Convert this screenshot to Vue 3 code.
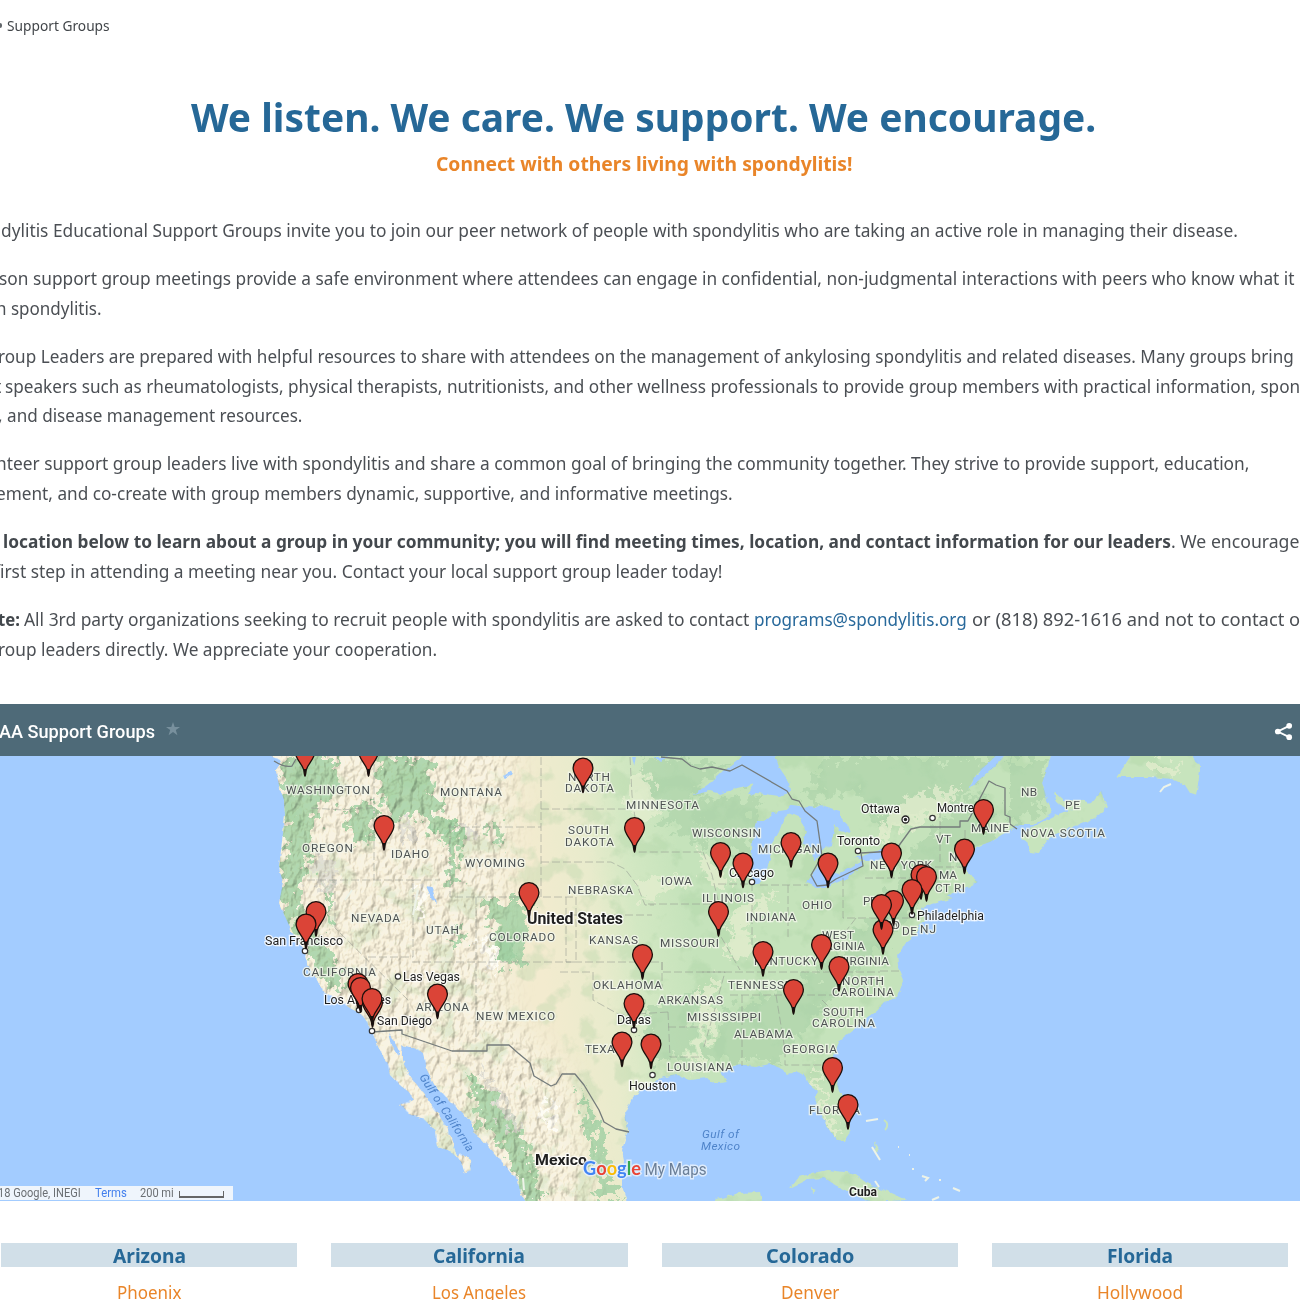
<script setup>
// Stretches or condenses a run of text to a given width.
const fit = (el, width) => {
  el.style.transform = 'none'
  const natural = el.offsetWidth
  el.style.transform = `scaleX(${width / natural})`
  el.style.marginRight = `${width - natural}px`
}
const vFit = {
  mounted(el, { value }) {
    fit(el, value)
    document.fonts.ready.then(() => fit(el, value))
  },
}

// Each line is a start offset and its runs: { t: text, w: width, b: bold, a: link, g: gap before }
const paragraphs = [
  [{ x: 1, runs: [{ t: 'dylitis Educational Support Groups invite you to join our peer network of people with spondylitis who are taking an active role in managing their disease.', w: 1237 }] }],
  [
    { x: -1, runs: [{ t: 'son support group meetings provide a safe environment where attendees can engage in confidential, non-judgmental interactions with peers who know what it', w: 1296 }] },
    { x: -4, runs: [{ t: 'n spondylitis.', w: 106 }] },
  ],
  [
    { x: -2, runs: [{ t: 'roup Leaders are prepared with helpful resources to share with attendees on the management of ankylosing spondylitis and related diseases. Many groups bring', w: 1296 }] },
    { x: -6, runs: [{ t: 't', w: 7 }, { t: 'speakers such as rheumatologists, physical therapists, nutritionists, and other wellness professionals to provide group members with practical information, spon', w: 1295, g: 4 }] },
    { x: -2, runs: [{ t: ', and disease management resources.', w: 304 }] },
  ],
  [
    { x: -4, runs: [{ t: 'nteer support group leaders live with spondylitis and share a common goal of bringing the community together. They strive to provide support, education,', w: 1253 }] },
    { x: -4, runs: [{ t: 'ement, and co-create with group members dynamic, supportive, and informative meetings.', w: 737 }] },
  ],
  [
    { x: 3, runs: [{ t: 'location below to learn about a group in your community; you will find meeting times, location, and contact information for our leaders', w: 1168, b: true }, { t: '. We encourage', w: 128 }] },
    { x: -6, runs: [{ t: 'first step in attending a meeting near you. Contact your local support group leader today!', w: 728 }] },
  ],
  [
    { x: -2, runs: [{ t: 'te:', w: 22, b: true }, { t: 'All 3rd party organizations seeking to recruit people with spondylitis are asked to contact', w: 725, g: 4 }, { t: 'programs@spondylitis.org', w: 213, g: 5, a: true }, { t: 'or (818) 892-1616 and not to contact o', w: 328, g: 5 }] },
    { x: -2, runs: [{ t: 'roup leaders directly. We appreciate your cooperation.', w: 439 }] },
  ],
]

const columns = [
  { state: 'Arizona', city: 'Phoenix', sw: 73, cw: 64 },
  { state: 'California', city: 'Los Angeles', sw: 92, cw: 94 },
  { state: 'Colorado', city: 'Denver', sw: 88, cw: 58 },
  { state: 'Florida', city: 'Hollywood', sw: 66, cw: 86 },
]

// [text, left, right, baseline]
const regions = [
  ['WASHINGTON', 286, 370, 794], ['MONTANA', 440, 502, 796], ['OREGON', 302, 353, 852],
  ['IDAHO', 391, 429, 858], ['WYOMING', 465, 525, 867], ['NEVADA', 351, 400, 922],
  ['UTAH', 426, 459, 933.5], ['COLORADO', 489, 555, 940.5], ['CALIFORNIA', 303, 376, 975.5],
  ['ARIZONA', 416, 469, 1010.5], ['NEW MEXICO', 476, 555, 1020], ['NORTH', 568, 610, 781],
  ['DAKOTA', 565, 614, 792], ['SOUTH', 568, 609, 834], ['DAKOTA', 565, 614, 846],
  ['MINNESOTA', 626, 699, 809], ['WISCONSIN', 692, 761, 837], ['MICHIGAN', 758, 820, 852.5],
  ['NEBRASKA', 568, 633, 893.5], ['IOWA', 661, 692, 884.5], ['ILLINOIS', 702, 754, 902],
  ['INDIANA', 746, 796, 921], ['OHIO', 802, 832, 908.5], ['KANSAS', 589, 638, 944],
  ['MISSOURI', 660, 719, 946.5], ['KENTUCKY', 754, 818, 965], ['WEST', 822, 854, 938.5],
  ['VIRGINIA', 814, 865, 949.5], ['VIRGINIA', 838, 889, 965], ['OKLAHOMA', 593, 662, 989],
  ['ARKANSAS', 658, 723, 1004], ['TENNESSEE', 728, 799, 989], ['NORTH', 842, 884, 984.5],
  ['CAROLINA', 832, 894, 995.5], ['SOUTH', 823, 864, 1015.5], ['CAROLINA', 812, 875, 1027],
  ['MISSISSIPPI', 687, 761, 1020.5], ['ALABAMA', 734, 793, 1037.5], ['GEORGIA', 783, 837, 1052.5],
  ['LOUISIANA', 667, 733, 1070.5], ['TEXAS', 585, 622, 1053], ['FLORIDA', 809, 860, 1114],
  ['NB', 1021, 1037, 796], ['PE', 1065, 1080, 808.5], ['NOVA SCOTIA', 1021, 1105, 837],
  ['MAINE', 971, 1009, 831.5], ['VT', 936, 951, 843], ['NH', 949, 967, 860.5],
  ['NEW YORK', 870, 932, 869], ['MA', 939, 957, 878.5], ['CT', 935, 950, 891.5],
  ['RI', 954, 965, 891.5], ['PENN', 863, 893, 904.5], ['MD', 888, 900, 928.5],
  ['DE', 902, 917, 934.5], ['NJ', 920, 936, 933],
]
const cities = [
  ['San Francisco', 265, 343, 945], ['Los Angeles', 324, 391, 1004], ['San Diego', 377, 432, 1025],
  ['Las Vegas', 403, 460, 981], ['Chicago', 729, 774, 876.5], ['Toronto', 837, 880, 845],
  ['Ottawa', 861, 900, 813], ['Montreal', 937, 983, 812], ['Philadelphia', 917, 984, 920],
  ['Dallas', 617, 651, 1024], ['Houston', 629, 676, 1090],
]
const countries = [
  ['United States', 527, 623, 924, 16], ['Mexico', 535, 587, 1165, 15.5], ['Cuba', 849, 877, 1196, 12.5],
]
const dots = [[305, 951], [359, 1010], [372, 1031], [398, 976.5], [752, 882], [858, 851], [932.5, 818], [912, 915], [634, 1030], [652.5, 1075]]

// Pin tips, drawn in order
const pins = [
  [305, 776], [368.5, 776], [384, 850], [316, 936], [306, 948.5], [529, 917], [583, 792.5],
  [634.5, 852], [720.5, 877], [743, 887.5], [791, 867], [828, 887.5], [718.5, 936], [642.5, 979],
  [763, 976], [821.5, 969], [839, 991], [793.5, 1014], [983.5, 834], [964.5, 873.5], [891.5, 877.5],
  [921, 899], [926.5, 901], [912, 914], [893.5, 925], [883, 954], [881.5, 929], [437.5, 1018.5],
  [358, 1008], [360.5, 1012], [372.5, 1027], [372, 1023], [634, 1028], [622, 1066.5], [651, 1068.5],
  [832.5, 1092], [848, 1129],
]

const land =
  'M270 750L272 757L282 761L276 770L279 785L284 800L285 815L283 833L281 850L279 867L283 883L279 903L288 923L295 937L303 948L307 963L317 980L324 993L338 1000L350 1008L363 1015L372 1032L380 1050L387 1062L390 1075L400 1085L410 1093L414 1100L400 1104L410 1115L422 1118L435 1130L437 1147L448 1150L460 1160L465 1173L471 1170L470 1160L460 1153L457 1156L448 1130L437 1112L423 1093L408 1073L402 1060L402 1045L414 1048L423 1053L427 1070L435 1085L450 1102L463 1113L473 1123L473 1132L482 1139L490 1148L503 1163L510 1172L518 1180L520 1192L526 1202L627 1202L622 1186L622 1173L624 1160L622 1150L628 1130L626 1120L625 1113L632 1098L640 1092L650 1087L660 1078L677 1075L690 1080L707 1078L715 1083L727 1081L720 1073L728 1067L740 1065L755 1067L770 1064L780 1068L787 1075L795 1071L803 1074L810 1085L817 1090L815 1103L821 1113L827 1127L837 1140L845 1141L850 1130L850 1119L846 1105L840 1090L834 1070L833 1056L840 1040L853 1030L865 1020L877 1011L885 1002L897 997L904 980L898 965L897 953L888 940L898 955L903 950L906 942L913 937L918 928L925 920L922 907L934 902L950 895L957 889L972 886L978 882L972 877L965 868L966 856L975 847L990 842L1003 834L1013 828L1020 825L1033 825L1045 818L1053 811L1047 800L1045 792L1042 783L1047 770L1052 750L1010 750L990 770L968 790L975 776L1002 750Z'
const islands = [
  'M1021 838L1032 827L1060 813L1090 804L1102 790L1103 800L1108 807L1095 818L1073 827L1050 837L1038 853L1030 852L1027 841Z',
  'M1053 791L1063 800L1086 801L1088 806L1070 810L1056 803Z',
  'M1117 777L1130 757L1131 750H1190L1200 765L1200 772L1196 795L1190 793L1185 785L1172 779L1150 777Z',
  'M790 1188L797 1178L812 1173L828 1170L853 1173L868 1184L885 1190L907 1200L870 1202L848 1192L838 1187L825 1178L808 1179Z',
  'M717 1199L740 1193L760 1192L762 1202L715 1202Z',
  'M927 903L943 896L953 898L929 905Z', 'M812 1188L817 1190L813 1193Z', 'M874 1142L879 1150L876 1154Z',
]
const lakes = [
  'M693 795L710 783L724 770L737 761L742 755L775 755L779 767L789 782L790 793L778 796L757 793L748 794L755 784L737 788L720 794L710 791Z',
  'M752 850L753 835L757 821L764 821L772 813L793 810L784 818L779 832L771 845L770 860L764 877L758 884L752 883L750 866Z',
  'M786 812L792 805L815 808L821 805L841 811L841 819L848 825L851 833L840 831L835 825L831 845L824 848L817 860L813 861L812 848L803 843L806 832L800 818Z',
  'M807 883L811 876L818 866L823 870L839 874L856 864L863 861L862 866L847 878L827 887L815 887Z',
  'M853 856L861 857L880 850L895 848L894 857L878 860L862 860Z',
  'M426 886L431 887L435 896L437 903L432 899Z', 'M388 1033L394 1040L400 1052L398 1056L391 1045Z',
  'M654 757L668 757L660 762ZM632 757L636 757L634 766Z', 'M503 777L512 771L511 775L505 779Z',
]
const greens = [
  'M282 757H340L332 800L318 805L312 850L300 890L305 920L330 950L345 985L330 990L305 950L288 920L281 900L286 870L284 820Z',
  'M375 757H425L440 810L460 830L440 840L420 815L400 820L380 800Z',
  'M350 810L375 800L375 840L355 845Z', 'M445 820L462 830L458 890L450 880Z', 'M325 870L332 900L330 930L325 920Z',
  'M488 900L530 900L522 965L495 960Z', 'M488 825L500 828L505 845L490 836Z', 'M500 930L518 940L510 970L498 968Z',
  'M465 1070L480 1085L510 1110L530 1150L540 1201H525L505 1150L480 1120Z', 'M436 820L440 835L434 838Z',
  'M580 1090L598 1120L604 1150L620 1200L600 1200L590 1150Z', 'M455 925L465 940L450 945Z',
]
const forests = [
  'M640 757L730 765L690 800L705 850L680 830L650 810Z', 'M690 800L760 794L750 830L752 860L725 845L700 830Z',
  'M800 985L850 940L900 880L900 860L980 790L1000 840L960 865L930 890L900 920L880 950L820 1010L780 1060L700 1060L730 1010Z',
  'M640 1010L700 990L690 1060L655 1060Z', 'M830 757H1000L960 800L880 830L860 790L800 800Z',
  'M1010 760H1050L1040 810L1010 825Z',
]
const pales = [
  'M700 990L716 975L712 1020L703 1060L690 1074L700 1030Z', 'M812 1065L822 1080L828 1112L840 1130L830 1135L820 1100Z',
  'M880 825L910 795L960 788L940 815L900 830L875 848Z', 'M730 910L780 890L740 930L765 950L730 960Z', 'M640 880L690 880L640 905Z',
  'M645 770L660 800L640 830L625 790Z', 'M700 850L730 870L725 890L705 880Z', 'M1150 760L1180 765L1175 778L1150 776Z',
]
const stateLines = [
  'M311 808L343 810L360 808L374 808V757', 'M374 808V880', 'M307 880H413V957H366V1000', 'M335 880V928L408 1000V1032',
  'M413 880H440M412 962H575M450 825V897H576V962M450 827H541M541 757V897M541 809H627M541 862H611L625 869L637 885L645 905H654',
  'M476 897V962V1040M566 897V915H652M566 915V962H662V990M560 972H593V1000L620 1015L668 1012',
  'M630 757L632 795L635 818V852H703M703 852L712 875L718 900L720 935L740 970M648 904H710M662 962V972H725L716 1005L703 1050',
  'M668 1012L670 1057H702M668 1027H705M702 972H880M730 995H840M742 995V1066M776 995L785 1050V1065H830M822 1000L850 1028',
  'M718 884H752V945M788 885V938M760 885H808M843 878V918H935M856 918L820 965M865 878H940M940 810V862M965 830V855M935 867H962M880 971H902',
]
const borders = [
  'M274 761Q285 768 292 766L296 759', 'M372 1032L402 1030V1034L452 1051H487V1045H509L518 1053L530 1063L534 1076L551 1086L556 1084L562 1074L575 1074L584 1085L593 1100L599 1110L604 1122L616 1129L629 1132',
  'M661 757L682 759L691 766L700 769L712 767L730 771L742 765L787 791L792 799L799 801L805 811L817 821L822 856L811 875L817 886L827 885L836 879L863 866L861 853L895 851L911 829L920 827H960L960 821L968 821L977 804L989 781L996 785L1005 788V815L1010 817V824L1017 829',
]
const islets = ['M866 1121L878 1119', 'M872 1147L880 1160', 'M922 1176L928 1178L925 1181', 'M953 1188L960 1191', 'M932 1200L939 1197', 'M1160 792L1164 787L1171 784', 'M898 1147h1M909 1155h1M912 1169h2M939 1180h2', 'M875 1181L879 1187', 'M418 890L413 915', 'M345 900L352 890', 'M523 1178L524 1190']
</script>

<template>
  <div class="page">
    <nav class="crumbs"><span class="dot"></span><span v-fit="103" class="run">Support Groups</span></nav>

    <header class="hero">
      <h1><span v-fit="905" class="run">We listen. We care. We support. We encourage.</span></h1>
      <h2><span v-fit="416" class="run">Connect with others living with spondylitis!</span></h2>
    </header>

    <main class="copy">
      <p v-for="(p, i) in paragraphs" :key="i">
        <span v-for="(line, j) in p" :key="j" class="line" :style="{ marginLeft: line.x + 'px' }">
          <span
            v-for="(r, k) in line.runs"
            :key="k"
            v-fit="r.w"
            class="run"
            :class="{ bold: r.b, link: r.a }"
            :style="{ marginLeft: (r.g || 0) + 'px' }"
          >{{ r.t }}</span>
        </span>
      </p>
    </main>

    <section class="map">
      <div class="bar">
        <div class="title">
          <span v-fit="156" class="run">AA Support Groups</span>
          <svg class="star" viewBox="0 0 14 14"><path d="M7 0l1.7 4.9H14L9.8 8l1.6 5.2L7 10.100l-4.400 3.100L4.200 8 0 4.900h5.300z" /></svg>
        </div>
        <svg class="share" viewBox="0 0 20 20">
          <path d="M16 4L4 10l12 6" /><circle cx="16" cy="4" r="3" /><circle cx="4" cy="10" r="3" /><circle cx="16" cy="16" r="3" />
        </svg>
      </div>

      <div class="canvas">
        <svg class="terrain" viewBox="0 756 1300 445">
          <defs>
            <linearGradient id="ground" gradientUnits="userSpaceOnUse" x1="540" y1="950" x2="690" y2="930">
              <stop offset="0" stop-color="#f3ebcf" /><stop offset=".4" stop-color="#e8ebcc" />
              <stop offset=".65" stop-color="#d3e8c3" /><stop offset="1" stop-color="#c5e3bb" />
            </linearGradient>
            <clipPath id="coast"><path :d="land" /><path v-for="d in islands" :key="d" :d="d" /></clipPath>
            <filter id="soft" x="-10%" y="-10%" width="120%" height="120%"><feGaussianBlur stdDeviation="14" /></filter>
            <mask id="west" maskUnits="userSpaceOnUse" x="240" y="740" width="420" height="480">
              <path d="M230 700H515L505 1010L570 1080L600 1240H230Z" fill="#fff" filter="url(#soft)" />
            </mask>
            <filter id="relief" filterUnits="userSpaceOnUse" x="260" y="750" width="380" height="455" color-interpolation-filters="sRGB">
              <feTurbulence type="fractalNoise" baseFrequency=".13 .08" numOctaves="4" seed="8" />
              <feColorMatrix values="0 0 0 0 0  0 0 0 0 0  0 0 0 0 0  1 0 0 0 0" />
              <feDiffuseLighting surfaceScale="3.2" diffuseConstant="1.17" lighting-color="#fff8ea"><feDistantLight azimuth="225" elevation="60" /></feDiffuseLighting>
            </filter>
            <filter id="patch" x="-10%" y="-10%" width="120%" height="120%">
              <feTurbulence type="fractalNoise" baseFrequency=".1" numOctaves="4" seed="4" result="n" />
              <feDisplacementMap in="SourceGraphic" in2="n" scale="36" xChannelSelector="R" yChannelSelector="G" />
              <feGaussianBlur stdDeviation=".7" />
            </filter>
            <filter id="rough" x="-5%" y="-5%" width="110%" height="110%">
              <feTurbulence type="fractalNoise" baseFrequency=".14" numOctaves="2" seed="11" result="n" />
              <feDisplacementMap in="SourceGraphic" in2="n" scale="5" xChannelSelector="R" yChannelSelector="G" />
            </filter>
            <filter id="speckle" filterUnits="userSpaceOnUse" x="260" y="750" width="950" height="455" color-interpolation-filters="sRGB">
              <feTurbulence type="fractalNoise" baseFrequency=".035" numOctaves="4" seed="21" />
              <feColorMatrix values="0 0 0 0 .62  0 0 0 0 .79  0 0 0 0 .60  0 7 0 0 -3.8" />
            </filter>
            <g id="pin">
              <path d="M0 0C-.6 0-.8-3-1.200-6C-3-13-9.900-17-9.900-24.500A9.900 9.900 0 0 1 9.900-24.500C9.900-17 3-13 1.200-6C.8-3 .6 0 0 0Z" fill="#db4437" stroke="#1c0f0c" stroke-width="1.300" />
              <path d="M0 1L-1.400-7H1.400Z" fill="#14100f" />
            </g>
          </defs>

          <rect y="756" width="1300" height="446" fill="#a3ccff" />
          <g filter="url(#rough)">
            <path :d="land" fill="url(#ground)" />
            <path v-for="d in islands" :key="d" :d="d" fill="#c7e4bd" />
          </g>
          <g clip-path="url(#coast)">
            <rect x="610" y="750" width="600" height="455" filter="url(#speckle)" opacity=".25" />
            <g filter="url(#patch)">
              <path v-for="d in forests" :key="d" :d="d" fill="#a9d1a7" opacity=".58" />
              <path v-for="d in pales" :key="d" :d="d" fill="#e4edcf" opacity=".75" />
              <path v-for="d in greens" :key="d" :d="d" fill="#9fcfa2" opacity=".8" />
              <path d="M312 860l12 -10 10 25 -2 20 -15 -5zM400 820l10 0 2 30 -10 -5zM462 823l12 2 -3 18 -8 -5zM482 1068l20 25 20 35 -8 5 -20 -35z" fill="#dddcd5" opacity=".8" />
              <path d="M415 895l8 -5 2 20 -6 10zM480 940l25 10 -15 20zM540 1105l12 -5 3 30 -10 0z" fill="#fdfcf5" />
            </g>
            <g mask="url(#west)" class="relief"><rect x="260" y="750" width="380" height="455" filter="url(#relief)" /></g>
          </g>
          <g filter="url(#rough)"><path v-for="d in lakes" :key="d" :d="d" fill="#a3ccff" /></g>
          <g class="states"><path v-for="d in stateLines" :key="d" :d="d" /></g>
          <g class="borders"><path v-for="d in borders" :key="d" :d="d" /></g>
          <g class="islets"><path v-for="d in islets" :key="d" :d="d" /><path d="M884 1120Q890 1124 885 1130" class="reef" /></g>

          <g class="regions">
            <text v-for="(l, i) in regions" :key="i" :x="l[1]" :y="l[3]" :textLength="l[2] - l[1]">{{ l[0] }}</text>
          </g>
          <g class="towns"><circle v-for="(d, i) in dots" :key="i" :cx="d[0]" :cy="d[1]" r="2.700" /></g>
          <g class="capital"><circle cx="905.500" cy="819.500" r="3.500" /><circle cx="905.500" cy="819.500" r="1.700" /></g>
          <g class="cities">
            <text v-for="l in cities" :key="l[0]" :x="l[1]" :y="l[3]" :textLength="l[2] - l[1]" lengthAdjust="spacingAndGlyphs">{{ l[0] }}</text>
          </g>
          <g class="waters">
            <text x="702" y="1138" textLength="37">Gulf of</text>
            <text x="701" y="1150" textLength="39">Mexico</text>
            <text transform="translate(419 1077) rotate(57)" textLength="90">Gulf of California</text>
          </g>
          <g class="countries">
            <text v-for="l in countries" :key="l[0]" :x="l[1]" :y="l[3]" :font-size="l[4]" :textLength="l[2] - l[1]" lengthAdjust="spacingAndGlyphs">{{ l[0] }}</text>
          </g>
          <g><use v-for="(p, i) in pins" :key="i" href="#pin" :x="p[0]" :y="p[1]" /></g>
          <g class="brand">
            <text x="583" y="1175" class="google" textLength="58" lengthAdjust="spacingAndGlyphs"><tspan fill="#4285f4">G</tspan><tspan fill="#ea4335">o</tspan><tspan fill="#fbbc05">o</tspan><tspan fill="#4285f4">g</tspan><tspan fill="#34a853">l</tspan><tspan fill="#ea4335">e</tspan></text>
            <text x="644.500" y="1175" class="mymaps" textLength="62" lengthAdjust="spacingAndGlyphs">My Maps</text>
          </g>
        </svg>
        <div class="legal">
          <span v-fit="83" class="run">18 Google, INEGI</span>
          <span v-fit="32" class="run terms">Terms</span>
          <span v-fit="34" class="run miles">200 mi</span>
          <span class="scale"></span>
        </div>
      </div>
    </section>

    <section class="columns">
      <div v-for="c in columns" :key="c.state" class="column">
        <h3><span v-fit="c.sw" class="run">{{ c.state }}</span></h3>
        <a><span v-fit="c.cw" class="run">{{ c.city }}</span></a>
      </div>
    </section>
  </div>
</template>

<style>
body { margin: 0; background: #fff; overflow: hidden; }
</style>

<style scoped>
.page { width: 1300px; height: 1300px; overflow: hidden; background: #fff; color: #4b4f54; font-family: "Noto Sans", "Open Sans", sans-serif; }
.run { display: inline-block; flex: none; white-space: pre; transform-origin: left center; }
.crumbs { display: flex; align-items: center; height: 50px; font-size: 14px; color: #414549; }
.dot { width: 2px; height: 5px; margin-right: 5px; border-radius: 0 3px 3px 0; background: #61666a; }
.hero { width: 1288px; padding-top: 37px; text-align: center; }
h1, h2, h3, p { margin: 0; }
h1 { display: flex; justify-content: center; height: 62px; line-height: 60px; font-size: 40px; color: #266897; }
h2 { display: flex; justify-content: center; height: 29px; line-height: 30px; font-size: 20px; color: #e98529; }
.copy { padding-top: 38px; height: 526px; box-sizing: border-box; font-size: 17.500px; line-height: 29.850px; }
.copy p { margin-bottom: 18.100px; }
.line { display: flex; height: 29.850px; white-space: nowrap; }
.bold { font-weight: 700; color: #43484d; }
.link { color: #28699b; }
.map { height: 497px; font-family: Roboto, sans-serif; }
.bar { display: flex; justify-content: space-between; align-items: center; height: 52px; box-sizing: border-box; padding: 2px 7px 0 0; background: #4e6a78; }
.title { display: flex; align-items: center; color: #fff; font-size: 18px; font-weight: 500; margin-left: -1px; }
.star { width: 14px; height: 14px; margin-left: 11px; margin-top: -4px; fill: #78909d; }
.share { width: 19px; height: 19px; fill: #fff; }
.share path { fill: none; stroke: #fff; stroke-width: 2; }
.canvas { position: relative; height: 445px; overflow: hidden; }
.terrain { display: block; width: 1300px; height: 445px; font-family: Roboto, sans-serif; }
.relief { mix-blend-mode: multiply; opacity: .42; }
.states path { fill: none; stroke: #929790; stroke-width: .9; stroke-dasharray: 8 3; opacity: .6; }
.borders path { fill: none; stroke: #747b7b; stroke-width: 1.300; stroke-linejoin: round; }
.islets path { fill: none; stroke: #edf3e8; stroke-width: 2; }
.islets .reef { stroke: #c7e4bd; }
.regions text { font-size: 11.800px; fill: #4e5353; stroke: #f4f7ec; stroke-opacity: .8; stroke-width: 2.500px; paint-order: stroke; }
.cities text { font-size: 12.500px; fill: #1e1e1e; stroke: #fff; stroke-opacity: .8; stroke-width: 2.500px; paint-order: stroke; }
.countries text { font-weight: 700; fill: #202020; stroke: #fff; stroke-opacity: .8; stroke-width: 2.500px; paint-order: stroke; }
.waters text { font-size: 11.800px; font-style: italic; fill: #4f84ca; }
.towns circle { fill: #fff; stroke: #333; stroke-width: 1.200; }
.capital circle { fill: #222; }
.capital circle:first-child { fill: #fff; stroke: #222; stroke-width: 1.300; }
.brand text { stroke: #e9f1fb; stroke-opacity: .85; stroke-width: 3px; paint-order: stroke; }
.google { font-family: Lato, sans-serif; font-size: 19px; font-weight: 700; }
.mymaps { font-size: 17px; fill: #6b7f98; }
.legal { position: absolute; left: 0; bottom: 1px; display: flex; align-items: center; width: 235px; height: 14px; background: rgba(245, 248, 252, .92); color: #6b6f73; font-size: 12px; margin-left: -2px; }
.terms { position: relative; left: 14px; color: #427fed; }
.miles { position: relative; left: 27px; }
.scale { position: relative; left: 33px; top: 1px; width: 43px; height: 5px; border: solid #666; border-width: 0 1px 2px; }
.columns { display: flex; gap: 34px; padding: 42px 0 0 1px; }
.column { width: 296.300px; flex: none; }
h3 { display: flex; justify-content: center; height: 24px; line-height: 25px; font-size: 20px; color: #266897; background: #d1dfe8; }
.column a { display: flex; justify-content: center; height: 32px; line-height: 30px; padding-top: 10px; font-size: 17.500px; color: #e98529; }
</style>
